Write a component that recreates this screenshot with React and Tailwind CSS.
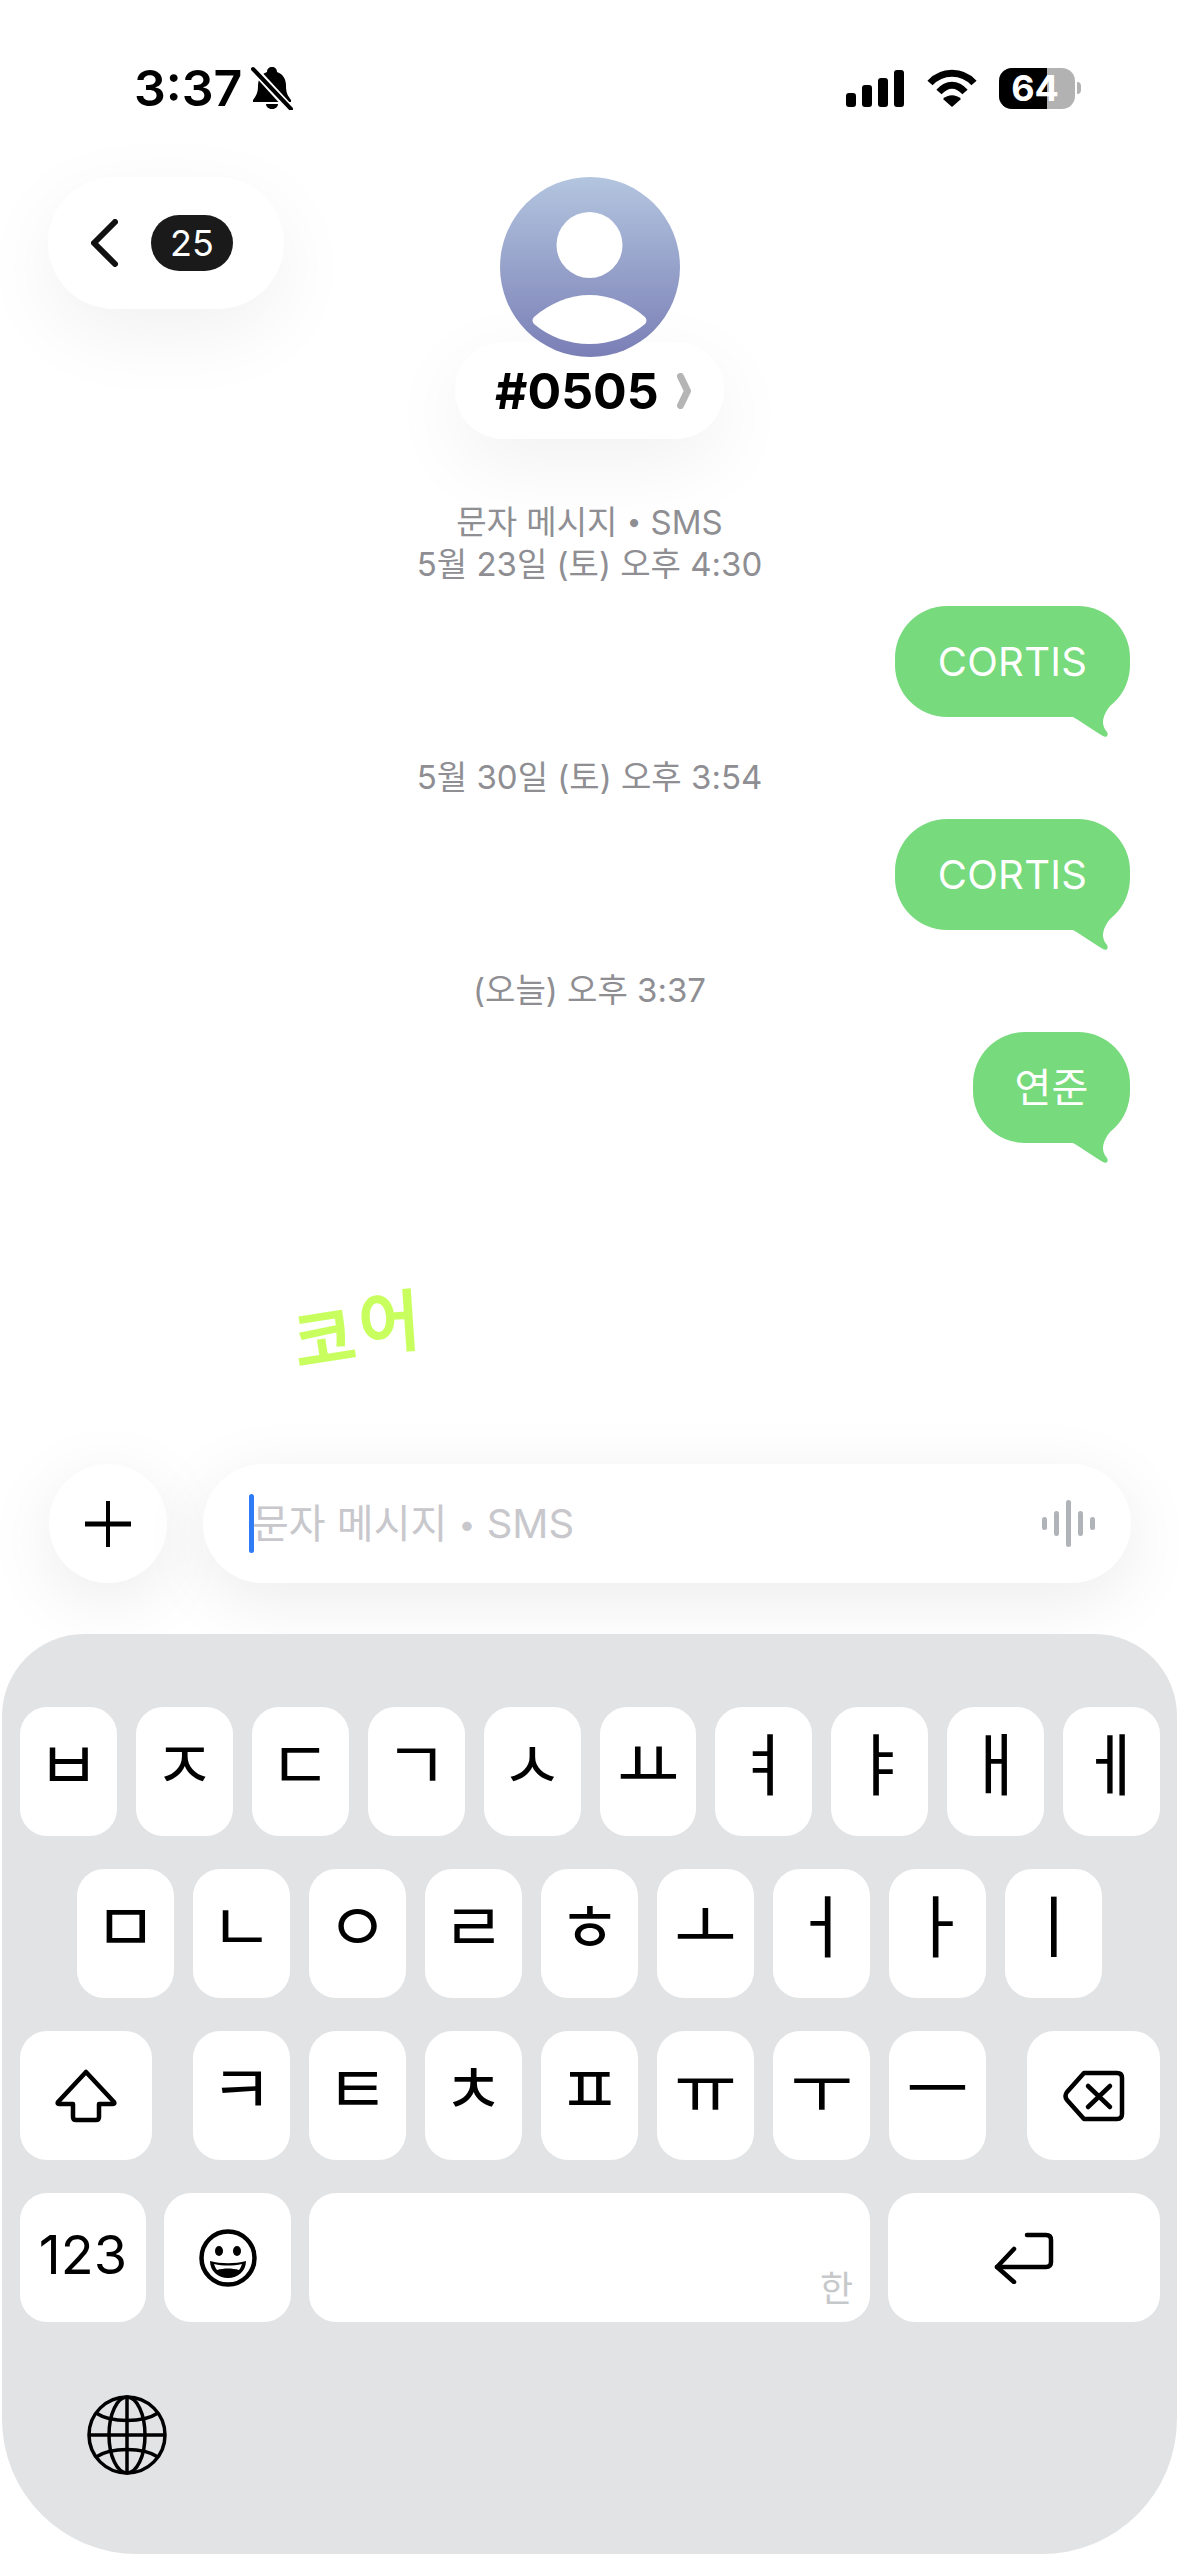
const R1 = ["ㅂ","ㅈ","ㄷ","ㄱ","ㅅ","ㅛ","ㅕ","ㅑ","ㅐ","ㅔ"];
const R2 = ["ㅁ","ㄴ","ㅇ","ㄹ","ㅎ","ㅗ","ㅓ","ㅏ","ㅣ"];
const R3 = ["ㅋ","ㅌ","ㅊ","ㅍ","ㅠ","ㅜ","ㅡ"];

function Key({ children, className = "" }) {
  return (
    <div className={"bg-white rounded-[27px] h-[129px] flex items-center justify-center text-black " + className}>
      {children}
    </div>
  );
}

function Jamo({ c }) {
  return <span className="text-[68px] leading-none font-normal -translate-y-[7px] block">{c}</span>;
}

function Stamp({ children }) {
  return <div className="h-[42px] text-[33px] leading-[42px] font-normal text-[#8e8e93] text-center">{children}</div>;
}

function Bubble({ children, className = "" }) {
  return (
    <div className={"relative self-end h-[111px] rounded-[52px] bg-[#77da7c] flex items-center justify-center text-white text-[40px] tracking-[0.3px] " + className}>
      {children}
      <svg className="absolute right-[20px] top-[96px]" width="42" height="36" viewBox="0 0 42 36">
        <path d="M0 4 H42 C35 13 32 22 39 30 C41 34 38 36 35 34 C25 28 14 20 5 15 H0 Z" fill="#77da7c" />
      </svg>
    </div>
  );
}

export default function App() {
  return (
    <div className="w-[1179px] h-[2556px] bg-white flex flex-col overflow-hidden text-black font-['Inter','Noto_Sans_CJK_KR',sans-serif]">
      {/* status bar */}
      <div className="h-[177px] shrink-0 flex justify-between items-start pt-[60px] pl-[134px] pr-[98px]">
        <div className="flex items-center gap-[9px] h-[56px]">
          <span className="text-[50px] leading-none font-semibold">3:37</span>
          <svg width="42" height="44" viewBox="0 0 42 44">
            <path d="M21 1 C24 1 26 3 26 6 C32 8 35 13 35 20 C35 27 37 30 40 34 L40 36 L2 36 L2 34 C5 30 7 27 7 20 C7 13 10 8 16 6 C16 3 18 1 21 1 Z" fill="#000" />
            <path d="M15 38 L27 38 C27 41 24 43 21 43 C18 43 15 41 15 38 Z" fill="#000" />
            <path d="M-2 -2 L42 46" stroke="#fff" strokeWidth="8" />
            <path d="M2 3 L40 43" stroke="#000" strokeWidth="4" strokeLinecap="round" />
          </svg>
        </div>
        <div className="flex items-center h-[56px]">
          <div className="flex items-end gap-[6px] h-[37px]">
            <div className="w-[10px] h-[14px] bg-black rounded-[3px]" />
            <div className="w-[10px] h-[22px] bg-black rounded-[3px]" />
            <div className="w-[10px] h-[29px] bg-black rounded-[3px]" />
            <div className="w-[10px] h-[37px] bg-black rounded-[3px]" />
          </div>
          <svg className="ml-[23px]" width="50" height="38" viewBox="0 0 50 38">
            <path d="M3 14 C15 1 35 1 47 14" fill="none" stroke="#000" strokeWidth="7" />
            <path d="M12 23 C20 14 30 14 38 23" fill="none" stroke="#000" strokeWidth="7" />
            <path d="M16 30 C21 25 29 25 34 30 L25 38 Z" fill="#000" />
          </svg>
          <div className="ml-[22px] relative w-[76px] h-[41px] rounded-[13px] overflow-hidden bg-[#b2b2b2] flex">
            <div className="w-[48px] h-full bg-black" />
            <span className="absolute inset-0 flex items-center justify-center text-white text-[36px] leading-none font-bold pr-[4px]">64</span>
          </div>
          <div className="ml-[2px] w-[4px] h-[12px] rounded-r-full bg-[#b2b2b2]" />
        </div>
      </div>

      {/* header */}
      <div className="shrink-0 grid grid-cols-[1fr_auto_1fr] px-[48px] items-start">
        <div className="w-[236px] h-[132px] rounded-[66px] bg-white shadow-[0_24px_80px_rgba(0,0,0,0.06)] flex items-center pl-[43px] gap-[33px]">
          <svg width="27" height="48" viewBox="0 0 27 48">
            <path d="M24 3 L3 24 L24 45" fill="none" stroke="#111" strokeWidth="6" strokeLinecap="round" strokeLinejoin="round" />
          </svg>
          <div className="w-[82px] h-[56px] rounded-[28px] bg-[#1a1a1a] text-white text-[36px] leading-none flex items-center justify-center">25</div>
        </div>
        <div className="flex flex-col items-center">
          <svg className="relative z-10" width="180" height="180" viewBox="0 0 180 180">
            <defs>
              <linearGradient id="av" x1="0" y1="0" x2="0" y2="1">
                <stop offset="0" stopColor="#b3c5df" />
                <stop offset="1" stopColor="#7a7fb6" />
              </linearGradient>
            </defs>
            <circle cx="90" cy="90" r="90" fill="url(#av)" />
            <circle cx="89.5" cy="68" r="33" fill="#fff" />
            <path d="M34 140 C50 126 70 118 89.5 118 C109 118 129 126 145 140 C147 142 147 145 145 147 C130 160 110 167 89.5 167 C69 167 49 160 34 147 C32 145 32 142 34 140 Z" fill="#fff" />
          </svg>
          <div className="-mt-[15px] w-[269px] h-[97px] rounded-[48px] bg-white shadow-[0_24px_80px_rgba(0,0,0,0.06)] flex items-center pl-[40px] gap-[18px]">
            <span className="text-[50px] leading-none font-bold">#0505</span>
            <svg width="14" height="36" viewBox="0 0 14 36">
              <path d="M3.5 3.5 L10.5 18 L3.5 32.5" fill="none" stroke="#b5b5b5" strokeWidth="7" strokeLinejoin="round" strokeLinecap="round" />
            </svg>
          </div>
        </div>
        <div />
      </div>

      {/* thread */}
      <div className="shrink-0 flex flex-col pt-[62px] px-[49px]">
        <Stamp>문자 메시지 <span className="text-[26px] leading-none align-[3px]">•</span> SMS</Stamp>
        <Stamp>5월 23일 (토) 오후 4:30</Stamp>
        <Bubble className="mt-[21px] w-[235px]">CORTIS</Bubble>
        <div className="mt-[39px]"><Stamp>5월 30일 (토) 오후 3:54</Stamp></div>
        <Bubble className="mt-[21px] w-[235px]">CORTIS</Bubble>
        <div className="mt-[39px]"><Stamp>(오늘) 오후 3:37</Stamp></div>
        <Bubble className="mt-[21px] w-[157px]">연준</Bubble>
      </div>

      {/* sticker */}
      <div className="flex-1 flex items-start gap-[4px] pl-[294px] pt-[150px]">
        <span className="block text-[#c8ff5f] text-[66px] leading-none font-normal [-webkit-text-stroke:3px_#c8ff5f] -rotate-[9deg] translate-y-[13px]">코</span>
        <span className="block text-[#c8ff5f] text-[66px] leading-none font-normal [-webkit-text-stroke:3px_#c8ff5f] -rotate-[4deg] -translate-y-[4px]">어</span>
      </div>

      {/* input */}
      <div className="shrink-0 flex items-center gap-[36px] pl-[49px] pr-[48px] mb-[51px]">
        <div className="w-[118px] h-[119px] rounded-full bg-white shadow-[0_16px_70px_rgba(0,0,0,0.08)] flex items-center justify-center">
          <svg width="46" height="46" viewBox="0 0 46 46">
            <path d="M23 0 V46" stroke="#000" strokeWidth="4" strokeLinecap="round" />
            <path d="M0 23 H46" stroke="#000" strokeWidth="5" strokeLinecap="round" />
          </svg>
        </div>
        <div className="flex-1 h-[119px] rounded-[60px] bg-white shadow-[0_16px_70px_rgba(0,0,0,0.08)] flex items-center pl-[46px] pr-[36px]">
          <div className="w-[5px] h-[59px] rounded-full bg-[#2f7bf6]" />
          <span className="flex-1 -ml-[2px] text-[40px] leading-none text-[#c7c7cc]">문자 메시지 <span className="text-[30px] leading-none align-[3px]">•</span> SMS</span>
          <div className="flex items-center gap-[7px]">
            <div className="w-[5px] h-[13px] rounded-full bg-[#b0b3b8]" />
            <div className="w-[5px] h-[25px] rounded-full bg-[#b0b3b8]" />
            <div className="w-[5px] h-[47px] rounded-full bg-[#b0b3b8]" />
            <div className="w-[5px] h-[25px] rounded-full bg-[#b0b3b8]" />
            <div className="w-[5px] h-[13px] rounded-full bg-[#b0b3b8]" />
          </div>
        </div>
      </div>

      {/* keyboard */}
      <div className="shrink-0 h-[920px] mb-[2px] mx-[2px] bg-[#e2e3e5] rounded-t-[82px] rounded-b-[135px] pt-[73px] flex flex-col gap-[33px]">
        <div className="flex gap-[19px] pl-[18px] pr-[17px]">
          {R1.map((c) => <Key key={c} className="flex-1"><Jamo c={c} /></Key>)}
        </div>
        <div className="flex gap-[19px] pl-[75px] pr-[75px]">
          {R2.map((c) => <Key key={c} className="flex-1"><Jamo c={c} /></Key>)}
        </div>
        <div className="flex pl-[18px] pr-[17px]">
          <Key className="w-[132px]">
            <svg width="62" height="54" viewBox="0 0 62 54">
              <path d="M31 3 L3 33 Q2 35 4 35 H18 V48 Q18 51 21 51 H41 Q44 51 44 48 V35 H58 Q60 35 59 33 Z" fill="none" stroke="#000" strokeWidth="4.5" strokeLinejoin="round" />
            </svg>
          </Key>
          <div className="flex-1 flex gap-[19px] mx-[41px]">
            {R3.map((c) => <Key key={c} className="flex-1"><Jamo c={c} /></Key>)}
          </div>
          <Key className="w-[133px]">
            <svg width="62" height="52" viewBox="0 0 62 52">
              <path d="M21 3 H54 Q59 3 59 8 V44 Q59 49 54 49 H21 L4 30 Q1 26 4 22 Z" fill="none" stroke="#000" strokeWidth="4.5" strokeLinejoin="round" />
              <path d="M25 16 L47 37 M47 16 L25 37" stroke="#000" strokeWidth="4.5" strokeLinecap="round" />
            </svg>
          </Key>
        </div>
        <div className="flex gap-[18px] pl-[18px] pr-[17px]">
          <Key className="w-[126px]"><span className="text-[54px] leading-none -translate-y-[3px] block">123</span></Key>
          <Key className="w-[127px]">
            <svg width="58" height="58" viewBox="0 0 58 58">
              <circle cx="29" cy="29" r="26.5" fill="none" stroke="#000" strokeWidth="4.5" />
              <ellipse cx="20" cy="22" rx="4" ry="5" fill="#000" />
              <ellipse cx="38" cy="22" rx="4" ry="5" fill="#000" />
              <path d="M11 32 C22 35 36 35 47 32 C47 42 39 49 29 49 C19 49 11 42 11 32 Z" fill="#000" />
              <path d="M15 35 C24 37 34 37 43 35 C42 38 41 40 40 41 C33 39 25 39 18 41 C17 40 16 38 15 35 Z" fill="#fff" />
            </svg>
          </Key>
          <Key className="w-[561px] !items-end !justify-end pr-[17px] pb-[15px]">
            <span className="text-[36px] leading-none text-[#c7c8ca]">한</span>
          </Key>
          <Key className="flex-1">
            <svg width="60" height="52" viewBox="0 0 60 52">
              <path d="M33 3 H52 Q57 3 57 8 V30 Q57 35 52 35 H3" fill="none" stroke="#000" strokeWidth="4.5" strokeLinecap="round" />
              <path d="M20 17 L3 35 L20 50" fill="none" stroke="#000" strokeWidth="4.5" strokeLinecap="round" strokeLinejoin="round" />
            </svg>
          </Key>
        </div>
        <div className="pl-[85px] pt-[40px]">
          <svg width="80" height="80" viewBox="0 0 80 80" fill="none" stroke="#000" strokeWidth="3.5">
            <circle cx="40" cy="40" r="38" />
            <ellipse cx="40" cy="40" rx="18" ry="38" />
            <path d="M40 2 V78 M2 40 H78" />
            <path d="M9 18 C24 28 56 28 71 18" />
            <path d="M9 62 C24 52 56 52 71 62" />
          </svg>
        </div>
      </div>
    </div>
  );
}
